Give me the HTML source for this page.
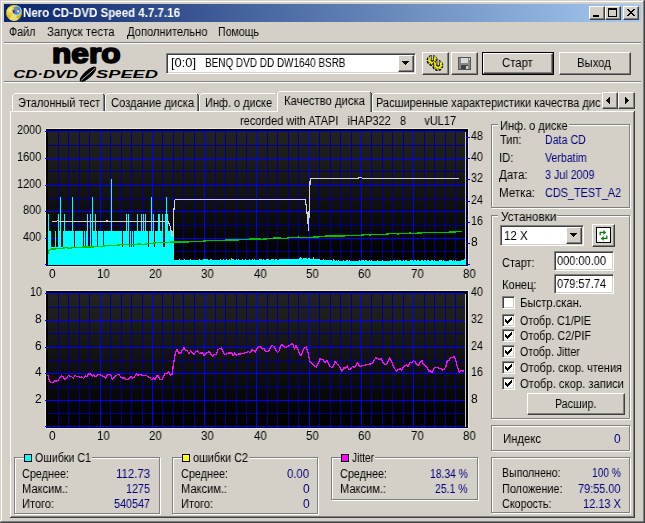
<!DOCTYPE html>
<html><head><meta charset="utf-8"><title>Nero CD-DVD Speed 4.7.7.16</title>
<style>
html,body{margin:0;padding:0;}
body{width:645px;height:523px;overflow:hidden;background:#D4D0C8;position:relative;
 font-family:"Liberation Sans",sans-serif;font-size:11px;color:#000;}
div,span,svg{position:absolute;box-sizing:border-box;}
.t{will-change:transform;white-space:pre;font-size:12px;line-height:14px;height:14px;transform-origin:0 0;}
.btn{background:#D4D0C8;border:1px solid;border-color:#fff #404040 #404040 #fff;
 box-shadow:inset -1px -1px 0 #808080, inset 1px 1px 0 #D4D0C8;}
.sunk{border:1px solid;border-color:#808080 #fff #fff #808080;
 box-shadow:inset 1px 1px 0 #404040, inset -1px -1px 0 #D4D0C8;}
.gb{border:1px solid #808080;box-shadow:1px 1px 0 #fff, inset 1px 1px 0 #fff;}
</style></head><body>

<div style="left:0px;top:0px;width:645px;height:1px;background:#D4D0C8;"></div>
<div style="left:0px;top:0px;width:1px;height:523px;background:#D4D0C8;"></div>
<div style="left:1px;top:1px;width:643px;height:1px;background:#fff;"></div>
<div style="left:1px;top:1px;width:1px;height:521px;background:#fff;"></div>
<div style="left:0px;top:522px;width:645px;height:1px;background:#404040;"></div>
<div style="left:644px;top:0px;width:1px;height:523px;background:#404040;"></div>
<div style="left:1px;top:521px;width:643px;height:1px;background:#808080;"></div>
<div style="left:643px;top:1px;width:1px;height:521px;background:#808080;"></div>
<div style="left:4px;top:4px;width:637px;height:18px;background:linear-gradient(to right,#0A246A 0%,#A6CAF0 100%);"></div>
<svg style="left:6px;top:5px" width="16" height="16" viewBox="0 0 16 16">
<defs><radialGradient id="cdg" cx="0.35" cy="0.3" r="0.8"><stop offset="0" stop-color="#f4ec60"/><stop offset="0.5" stop-color="#e2cc1c"/><stop offset="1" stop-color="#c8a814"/></radialGradient></defs>
<circle cx="8" cy="8" r="7.9" fill="url(#cdg)"/>
<path d="M8 8 L3 14 A7.9 7.9 0 0 0 12.5 14.5 Z" fill="#f0e8a0" opacity="0.7"/>
<path d="M8 8 L0.3 6 A7.9 7.9 0 0 1 3 2 Z" fill="#f8f080" opacity="0.6"/>
<circle cx="10.5" cy="5.6" r="4.6" fill="#2a8fe0" stroke="#dcdce4" stroke-width="1"/>
<path d="M6.6 5.5 Q6.5 8 8.4 8.4 L8.8 5.2 Z" fill="#b01010"/>
<path d="M9 1.6 L10.2 1.4 L10.8 4.2 L13.2 5.8 L12.4 7 L9.6 5.2 Z" fill="#ff6e40"/>
<path d="M11.2 1.3 L13.6 2.8 L12.6 3.6 L11 2.6 Z" fill="#30a030"/>
<circle cx="7.4" cy="3.9" r="0.8" fill="#ffe000"/>
<circle cx="12.2" cy="6.6" r="1" fill="#fff"/>
</svg>
<span class="t" style="left:23.02px;top:6.00px;transform:scaleX(0.9609);color:#fff;font-weight:bold;">Nero CD-DVD Speed 4.7.7.16</span>
<div class="btn" style="left:589px;top:6px;width:16px;height:14px;"><div style="left:3px;top:8px;width:6px;height:2px;background:#000"></div></div>
<div class="btn" style="left:605px;top:6px;width:16px;height:14px;"><div style="left:2px;top:1px;width:9px;height:9px;border:1px solid #000;border-top-width:2px"></div></div>
<div class="btn" style="left:623px;top:6px;width:16px;height:14px;"><svg style="left:3px;top:2px" width="8" height="7" viewBox="0 0 8 7" shape-rendering="crispEdges"><path d="M0 0h2v1h-2zM6 0h2v1h-2zM1 1h2v1h-2zM5 1h2v1h-2zM2 2h4v1h-4zM3 3h2v1h-2zM2 4h4v1h-4zM1 5h2v1h-2zM5 5h2v1h-2zM0 6h2v1h-2zM6 6h2v1h-2z" fill="#000"/></svg></div>
<span class="t" style="left:9.15px;top:25.00px;transform:scaleX(0.8982);">Файл</span>
<span class="t" style="left:47.02px;top:25.00px;transform:scaleX(0.9515);">Запуск теста</span>
<span class="t" style="left:126.53px;top:25.00px;transform:scaleX(0.9320);">Дополнительно</span>
<span class="t" style="left:217.56px;top:25.00px;transform:scaleX(0.8846);">Помощь</span>
<div style="left:4px;top:42px;width:637px;height:1px;background:#808080;"></div>
<div style="left:4px;top:43px;width:637px;height:1px;background:#fff;"></div>
<div style="left:4px;top:81px;width:637px;height:1px;background:#808080;"></div>
<div style="left:4px;top:82px;width:637px;height:1px;background:#fff;"></div>
<svg style="left:12px;top:45px" width="150" height="38" viewBox="0 0 150 38">
<text x="40" y="17.5" font-family="Liberation Sans" font-weight="bold" font-size="27" textLength="68.5" lengthAdjust="spacingAndGlyphs" fill="#000" stroke="#000" stroke-width="1.7" stroke-linejoin="round">nero</text>
<g font-family="Liberation Sans" font-weight="bold" font-style="italic" font-size="11.6" fill="#000">
<text x="1.2" y="33" textLength="65" lengthAdjust="spacingAndGlyphs">CD·DVD</text>
<text x="84" y="33" textLength="62" lengthAdjust="spacingAndGlyphs">SPEED</text>
</g>
<ellipse cx="76" cy="29.2" rx="3.7" ry="10.6" transform="rotate(48 76 29.2)" fill="#000"/>
<path d="M69 35.5 L83.5 23" stroke="#D4D0C8" stroke-width="0.9"/>
</svg>
<div class="sunk" style="left:166px;top:53px;width:250px;height:21px;background:#fff;"></div>
<span class="t" style="left:171.46px;top:56.00px;transform:scaleX(1.0707);">[0:0]</span>
<span class="t" style="left:204.79px;top:56.00px;transform:scaleX(0.8295);">BENQ DVD DD DW1640 BSRB</span>
<div class="btn" style="left:398px;top:55px;width:16px;height:17px;"><svg style="left:3px;top:5px" width="7" height="4" viewBox="0 0 7 4" shape-rendering="crispEdges"><path d="M0 0h7v1h-7zM1 1h5v1h-5zM2 2h3v1h-3zM3 3h1v1h-1z"/></svg></div>
<div class="btn" style="left:422px;top:52px;width:27px;height:23px;"><svg style="left:3px;top:2px" width="20" height="18" viewBox="0 0 20 18"><circle cx="6.1000000000000005" cy="5.4" r="3.7" fill="none" stroke="#000" stroke-width="3.6" stroke-dasharray="2.0 0.9"/><circle cx="6.4" cy="5.0" r="3.0" fill="#000"/><circle cx="6.4" cy="5.0" r="3.5" fill="none" stroke="#f4f000" stroke-width="2.0" stroke-dasharray="1.6 1.15"/><circle cx="6.4" cy="5.0" r="2.5" fill="none" stroke="#f4f000" stroke-width="1.5"/><rect x="4.800000000000001" y="-0.20000000000000018" width="3.2" height="6" fill="#202020"/><rect x="5.5" y="-0.20000000000000018" width="1.9" height="5.4" fill="#9a9aa4"/><rect x="6.2" y="-0.20000000000000018" width="0.7" height="5.4" fill="#d8d8e0"/><circle cx="11.799999999999999" cy="10.5" r="3.7" fill="none" stroke="#000" stroke-width="3.6" stroke-dasharray="2.0 0.9"/><circle cx="12.1" cy="10.1" r="3.0" fill="#000"/><circle cx="12.1" cy="10.1" r="3.5" fill="none" stroke="#f4f000" stroke-width="2.0" stroke-dasharray="1.6 1.15"/><circle cx="12.1" cy="10.1" r="2.5" fill="none" stroke="#f4f000" stroke-width="1.5"/><rect x="10.5" y="4.8999999999999995" width="3.2" height="6" fill="#202020"/><rect x="11.2" y="4.8999999999999995" width="1.9" height="5.4" fill="#9a9aa4"/><rect x="11.9" y="4.8999999999999995" width="0.7" height="5.4" fill="#d8d8e0"/></svg></div>
<div class="btn" style="left:451px;top:52px;width:27px;height:23px;"><svg style="left:6px;top:4px" width="14" height="14" viewBox="0 0 14 14" shape-rendering="crispEdges">
<rect x="0" y="0" width="13" height="13" fill="#555"/>
<rect x="1" y="1" width="11" height="11" fill="#888"/>
<rect x="3" y="1" width="7" height="5" fill="#d8d8d8"/>
<rect x="3" y="8" width="7" height="4" fill="#444"/>
<rect x="8" y="9" width="2" height="3" fill="#ccc"/>
<rect x="11" y="1" width="1" height="2" fill="#ddd"/>
</svg></div>
<div style="left:482px;top:52px;width:72px;height:23px;background:#000;"></div>
<div class="btn" style="left:483px;top:53px;width:70px;height:21px;"></div>
<span class="t" style="left:501.53px;top:56.00px;transform:scaleX(0.9445);">Старт</span>
<div class="btn" style="left:559px;top:52px;width:72px;height:23px;"></div>
<span class="t" style="left:576.93px;top:56.00px;transform:scaleX(0.9385);">Выход</span>
<div style="left:10px;top:111px;width:624px;height:1px;background:#fff;"></div>
<div style="left:10px;top:111px;width:1px;height:406px;background:#fff;"></div>
<div style="left:634px;top:111px;width:1px;height:407px;background:#404040;"></div>
<div style="left:633px;top:112px;width:1px;height:405px;background:#808080;"></div>
<div style="left:10px;top:517px;width:625px;height:1px;background:#404040;"></div>
<div style="left:11px;top:516px;width:623px;height:1px;background:#808080;"></div>
<div style="left:12px;top:93px;width:93px;height:18px;background:#D4D0C8;"></div>
<div style="left:12px;top:95px;width:1px;height:16px;background:#fff;"></div>
<div style="left:13px;top:94px;width:1px;height:1px;background:#fff;"></div>
<div style="left:14px;top:93px;width:89px;height:1px;background:#fff;"></div>
<div style="left:104px;top:95px;width:1px;height:16px;background:#404040;"></div>
<div style="left:103px;top:94px;width:1px;height:1px;background:#404040;"></div>
<div style="left:103px;top:95px;width:1px;height:16px;background:#808080;"></div>
<span class="t" style="left:17.54px;top:96.00px;transform:scaleX(0.9119);">Эталонный тест</span>
<div style="left:105px;top:93px;width:94px;height:18px;background:#D4D0C8;"></div>
<div style="left:105px;top:95px;width:1px;height:16px;background:#fff;"></div>
<div style="left:106px;top:94px;width:1px;height:1px;background:#fff;"></div>
<div style="left:107px;top:93px;width:90px;height:1px;background:#fff;"></div>
<div style="left:198px;top:95px;width:1px;height:16px;background:#404040;"></div>
<div style="left:197px;top:94px;width:1px;height:1px;background:#404040;"></div>
<div style="left:197px;top:95px;width:1px;height:16px;background:#808080;"></div>
<span class="t" style="left:110.54px;top:96.00px;transform:scaleX(0.9289);">Создание диска</span>
<div style="left:199px;top:93px;width:78px;height:18px;background:#D4D0C8;"></div>
<div style="left:199px;top:95px;width:1px;height:16px;background:#fff;"></div>
<div style="left:200px;top:94px;width:1px;height:1px;background:#fff;"></div>
<div style="left:201px;top:93px;width:74px;height:1px;background:#fff;"></div>
<div style="left:276px;top:95px;width:1px;height:16px;background:#404040;"></div>
<div style="left:275px;top:94px;width:1px;height:1px;background:#404040;"></div>
<div style="left:275px;top:95px;width:1px;height:16px;background:#808080;"></div>
<span class="t" style="left:204.54px;top:96.00px;transform:scaleX(0.9108);">Инф. о диске</span>
<div style="left:372px;top:93px;width:235px;height:18px;background:#D4D0C8;"></div>
<div style="left:372px;top:95px;width:1px;height:16px;background:#fff;"></div>
<div style="left:373px;top:94px;width:1px;height:1px;background:#fff;"></div>
<div style="left:374px;top:93px;width:231px;height:1px;background:#fff;"></div>
<div style="left:606px;top:95px;width:1px;height:16px;background:#404040;"></div>
<div style="left:605px;top:94px;width:1px;height:1px;background:#404040;"></div>
<div style="left:605px;top:95px;width:1px;height:16px;background:#808080;"></div>
<span class="t" style="left:375.84px;top:96.00px;transform:scaleX(0.9193);">Расширенные характеристики качества дис</span>
<div style="left:601px;top:92px;width:34px;height:19px;background:#D4D0C8;"></div>
<div style="left:275px;top:93px;width:2px;height:18px;background:#D4D0C8;"></div>
<div style="left:277px;top:91px;width:95px;height:21px;background:#D4D0C8;"></div>
<div style="left:277px;top:93px;width:1px;height:19px;background:#fff;"></div>
<div style="left:278px;top:92px;width:1px;height:1px;background:#fff;"></div>
<div style="left:279px;top:91px;width:91px;height:1px;background:#fff;"></div>
<div style="left:371px;top:93px;width:1px;height:19px;background:#404040;"></div>
<div style="left:370px;top:92px;width:1px;height:1px;background:#404040;"></div>
<div style="left:370px;top:93px;width:1px;height:19px;background:#808080;"></div>
<span class="t" style="left:283.53px;top:94.00px;transform:scaleX(0.9423);">Качество диска</span>
<div style="left:278px;top:111px;width:92px;height:1px;background:#D4D0C8;"></div>
<div class="btn" style="left:602px;top:92px;width:16px;height:17px;"><svg style="left:3px;top:4px" width="4" height="7" viewBox="0 0 4 7" shape-rendering="crispEdges"><path d="M3 0h1v7h-1zM2 1h1v5h-1zM1 2h1v3h-1zM0 3h1v1h-1z"/></svg></div>
<div class="btn" style="left:618px;top:92px;width:17px;height:17px;"><svg style="left:6px;top:4px" width="4" height="7" viewBox="0 0 4 7" shape-rendering="crispEdges"><path d="M0 0h1v7h-1zM1 1h1v5h-1zM2 2h1v3h-1zM3 3h1v1h-1z"/></svg></div>
<span class="t" style="left:240.04px;top:114.00px;transform:scaleX(0.9140);">recorded with ATAPI   iHAP322   8      vUL17</span>
<svg style="left:0;top:0" width="645" height="523" viewBox="0 0 645 523"><defs><linearGradient id="g131" gradientUnits="userSpaceOnUse" x1="0" y1="131" x2="0" y2="264"><stop offset="0" stop-color="#232323"/><stop offset="1" stop-color="#000"/></linearGradient></defs><g shape-rendering="crispEdges"><path d="M47 128h422v1h-422zM46 129h1v1h-1zM45 130h1v136h-1zM468 129h1v137h-1zM47 266h421v1h-421z" fill="#e9e7e0"/><rect x="46" y="129" width="422" height="137" fill="#000"/><rect x="48" y="131" width="417" height="134" fill="url(#g131)"/><rect x="465" y="132" width="1" height="133" fill="#c8c8c8"/><path d="M58.5 131V266 M68.5 131V266 M79.5 131V266 M89.5 131V266 M110.5 131V266 M121.5 131V266 M131.5 131V266 M142.5 131V266 M162.5 131V266 M173.5 131V266 M183.5 131V266 M194.5 131V266 M215.5 131V266 M225.5 131V266 M236.5 131V266 M246.5 131V266 M267.5 131V266 M277.5 131V266 M288.5 131V266 M298.5 131V266 M319.5 131V266 M330.5 131V266 M340.5 131V266 M351.5 131V266 M371.5 131V266 M382.5 131V266 M392.5 131V266 M403.5 131V266 M424.5 131V266 M434.5 131V266 M445.5 131V266 M455.5 131V266 M48 145.5H465 M48 171.5H465 M48 198.5H465 M48 225.5H465 M48 251.5H465" stroke="#000090" stroke-width="1" fill="none"/><path d="M100.5 131V266 M152.5 131V266 M204.5 131V266 M256.5 131V266 M309.5 131V266 M361.5 131V266 M413.5 131V266 M45 131.5H465 M45 158.5H465 M45 185.5H465 M45 211.5H465 M45 238.5H465 M45 264.5H465" stroke="#0000ff" stroke-width="1" fill="none"/><path d="M48 214h1V265h-1zM49 231h1V265h-1zM50 231h1V265h-1zM51 247h1V265h-1zM52 247h1V265h-1zM53 247h1V265h-1zM54 247h1V265h-1zM55 231h1V265h-1zM56 247h1V265h-1zM57 247h1V265h-1zM58 214h1V265h-1zM59 231h1V265h-1zM60 197h1V265h-1zM61 247h1V265h-1zM62 247h1V265h-1zM63 231h1V265h-1zM64 214h1V265h-1zM65 231h1V265h-1zM66 231h1V265h-1zM67 231h1V265h-1zM68 231h1V265h-1zM69 231h1V265h-1zM70 231h1V265h-1zM71 231h1V265h-1zM72 197h1V265h-1zM73 231h1V265h-1zM74 247h1V265h-1zM75 231h1V265h-1zM76 231h1V265h-1zM77 231h1V265h-1zM78 231h1V265h-1zM79 231h1V265h-1zM80 231h1V265h-1zM81 231h1V265h-1zM82 231h1V265h-1zM83 247h1V265h-1zM84 231h1V265h-1zM85 247h1V265h-1zM86 231h1V265h-1zM87 214h1V265h-1zM88 247h1V265h-1zM89 247h1V265h-1zM90 214h1V265h-1zM91 247h1V265h-1zM92 197h1V265h-1zM93 231h1V265h-1zM94 231h1V265h-1zM95 214h1V265h-1zM96 231h1V265h-1zM97 247h1V265h-1zM98 231h1V265h-1zM99 231h1V265h-1zM100 231h1V265h-1zM101 231h1V265h-1zM102 231h1V265h-1zM103 247h1V265h-1zM104 231h1V265h-1zM105 231h1V265h-1zM106 231h1V265h-1zM107 231h1V265h-1zM108 231h1V265h-1zM109 231h1V265h-1zM110 231h1V265h-1zM111 179h1V265h-1zM112 231h1V265h-1zM113 231h1V265h-1zM114 231h1V265h-1zM115 231h1V265h-1zM116 231h1V265h-1zM117 231h1V265h-1zM118 231h1V265h-1zM119 231h1V265h-1zM120 231h1V265h-1zM121 231h1V265h-1zM122 247h1V265h-1zM123 231h1V265h-1zM124 231h1V265h-1zM125 231h1V265h-1zM126 214h1V265h-1zM127 231h1V265h-1zM128 214h1V265h-1zM129 247h1V265h-1zM130 231h1V265h-1zM131 247h1V265h-1zM132 231h1V265h-1zM133 247h1V265h-1zM134 231h1V265h-1zM135 231h1V265h-1zM136 231h1V265h-1zM137 214h1V265h-1zM138 231h1V265h-1zM139 231h1V265h-1zM140 231h1V265h-1zM141 214h1V265h-1zM142 231h1V265h-1zM143 214h1V265h-1zM144 231h1V265h-1zM145 214h1V265h-1zM146 231h1V265h-1zM147 231h1V265h-1zM148 247h1V265h-1zM149 231h1V265h-1zM150 231h1V265h-1zM151 197h1V265h-1zM152 231h1V265h-1zM153 214h1V265h-1zM154 247h1V265h-1zM155 231h1V265h-1zM156 231h1V265h-1zM157 231h1V265h-1zM158 214h1V265h-1zM159 214h1V265h-1zM160 231h1V265h-1zM161 231h1V265h-1zM162 214h1V265h-1zM163 247h1V265h-1zM164 247h1V265h-1zM165 214h1V265h-1zM166 197h1V265h-1zM167 214h1V265h-1zM168 231h1V265h-1zM169 231h1V265h-1zM170 231h1V265h-1zM171 231h1V265h-1zM172 231h1V265h-1zM173 236h1V265h-1zM174 260h1V265h-1zM175 260h1V265h-1zM176 260h1V265h-1zM177 260h1V265h-1zM178 260h1V265h-1zM179 259h1V265h-1zM180 260h1V265h-1zM181 260h1V265h-1zM182 260h1V265h-1zM183 260h1V265h-1zM184 259h1V265h-1zM185 260h1V265h-1zM186 260h1V265h-1zM187 260h1V265h-1zM188 260h1V265h-1zM189 260h1V265h-1zM190 259h1V265h-1zM191 260h1V265h-1zM192 260h1V265h-1zM193 260h1V265h-1zM194 260h1V265h-1zM195 260h1V265h-1zM196 260h1V265h-1zM197 260h1V265h-1zM198 260h1V265h-1zM199 259h1V265h-1zM200 260h1V265h-1zM201 260h1V265h-1zM202 260h1V265h-1zM203 259h1V265h-1zM204 259h1V265h-1zM205 259h1V265h-1zM206 259h1V265h-1zM207 259h1V265h-1zM208 260h1V265h-1zM209 260h1V265h-1zM210 259h1V265h-1zM211 259h1V265h-1zM212 260h1V265h-1zM213 260h1V265h-1zM214 260h1V265h-1zM215 260h1V265h-1zM216 260h1V265h-1zM217 260h1V265h-1zM218 260h1V265h-1zM219 260h1V265h-1zM220 259h1V265h-1zM221 260h1V265h-1zM222 260h1V265h-1zM223 259h1V265h-1zM224 260h1V265h-1zM225 260h1V265h-1zM226 259h1V265h-1zM227 260h1V265h-1zM228 260h1V265h-1zM229 259h1V265h-1zM230 260h1V265h-1zM231 258h1V265h-1zM232 259h1V265h-1zM233 259h1V265h-1zM234 260h1V265h-1zM235 260h1V265h-1zM236 259h1V265h-1zM237 260h1V265h-1zM238 259h1V265h-1zM239 260h1V265h-1zM240 260h1V265h-1zM241 260h1V265h-1zM242 259h1V265h-1zM243 260h1V265h-1zM244 260h1V265h-1zM245 259h1V265h-1zM246 260h1V265h-1zM247 260h1V265h-1zM248 260h1V265h-1zM249 259h1V265h-1zM250 260h1V265h-1zM251 260h1V265h-1zM252 259h1V265h-1zM253 260h1V265h-1zM254 259h1V265h-1zM255 260h1V265h-1zM256 260h1V265h-1zM257 260h1V265h-1zM258 260h1V265h-1zM259 259h1V265h-1zM260 259h1V265h-1zM261 259h1V265h-1zM262 260h1V265h-1zM263 259h1V265h-1zM264 260h1V265h-1zM265 260h1V265h-1zM266 259h1V265h-1zM267 259h1V265h-1zM268 259h1V265h-1zM269 260h1V265h-1zM270 260h1V265h-1zM271 259h1V265h-1zM272 259h1V265h-1zM273 259h1V265h-1zM274 260h1V265h-1zM275 259h1V265h-1zM276 259h1V265h-1zM277 260h1V265h-1zM278 260h1V265h-1zM279 259h1V265h-1zM280 259h1V265h-1zM281 259h1V265h-1zM282 259h1V265h-1zM283 259h1V265h-1zM284 259h1V265h-1zM285 259h1V265h-1zM286 259h1V265h-1zM287 259h1V265h-1zM288 259h1V265h-1zM289 259h1V265h-1zM290 259h1V265h-1zM291 259h1V265h-1zM292 259h1V265h-1zM293 259h1V265h-1zM294 259h1V265h-1zM295 259h1V265h-1zM296 259h1V265h-1zM297 259h1V265h-1zM298 259h1V265h-1zM299 258h1V265h-1zM300 257h1V265h-1zM301 258h1V265h-1zM302 259h1V265h-1zM303 258h1V265h-1zM304 258h1V265h-1zM305 258h1V265h-1zM306 258h1V265h-1zM307 259h1V265h-1zM308 258h1V265h-1zM309 258h1V265h-1zM310 259h1V265h-1zM311 259h1V265h-1zM312 259h1V265h-1zM313 257h1V265h-1zM314 259h1V265h-1zM315 259h1V265h-1zM316 259h1V265h-1zM317 259h1V265h-1zM318 259h1V265h-1zM319 259h1V265h-1zM320 260h1V265h-1zM321 260h1V265h-1zM322 260h1V265h-1zM323 259h1V265h-1zM324 260h1V265h-1zM325 260h1V265h-1zM326 260h1V265h-1zM327 260h1V265h-1zM328 260h1V265h-1zM329 260h1V265h-1zM330 260h1V265h-1zM331 260h1V265h-1zM332 261h1V265h-1zM333 259h1V265h-1zM334 260h1V265h-1zM335 261h1V265h-1zM336 260h1V265h-1zM337 261h1V265h-1zM338 260h1V265h-1zM339 261h1V265h-1zM340 261h1V265h-1zM341 261h1V265h-1zM342 261h1V265h-1zM343 260h1V265h-1zM344 261h1V265h-1zM345 261h1V265h-1zM346 260h1V265h-1zM347 260h1V265h-1zM348 261h1V265h-1zM349 260h1V265h-1zM350 261h1V265h-1zM351 261h1V265h-1zM352 261h1V265h-1zM353 261h1V265h-1zM354 261h1V265h-1zM355 261h1V265h-1zM356 261h1V265h-1zM357 261h1V265h-1zM358 261h1V265h-1zM359 260h1V265h-1zM360 261h1V265h-1zM361 260h1V265h-1zM362 260h1V265h-1zM363 260h1V265h-1zM364 261h1V265h-1zM365 260h1V265h-1zM366 260h1V265h-1zM367 261h1V265h-1zM368 261h1V265h-1zM369 260h1V265h-1zM370 261h1V265h-1zM371 260h1V265h-1zM372 261h1V265h-1zM373 261h1V265h-1zM374 261h1V265h-1zM375 261h1V265h-1zM376 261h1V265h-1zM377 260h1V265h-1zM378 261h1V265h-1zM379 261h1V265h-1zM380 261h1V265h-1zM381 261h1V265h-1zM382 260h1V265h-1zM383 261h1V265h-1zM384 261h1V265h-1zM385 261h1V265h-1zM386 261h1V265h-1zM387 261h1V265h-1zM388 261h1V265h-1zM389 261h1V265h-1zM390 260h1V265h-1zM391 261h1V265h-1zM392 261h1V265h-1zM393 260h1V265h-1zM394 260h1V265h-1zM395 261h1V265h-1zM396 260h1V265h-1zM397 260h1V265h-1zM398 261h1V265h-1zM399 260h1V265h-1zM400 260h1V265h-1zM401 261h1V265h-1zM402 261h1V265h-1zM403 260h1V265h-1zM404 261h1V265h-1zM405 260h1V265h-1zM406 260h1V265h-1zM407 261h1V265h-1zM408 261h1V265h-1zM409 261h1V265h-1zM410 260h1V265h-1zM411 260h1V265h-1zM412 260h1V265h-1zM413 261h1V265h-1zM414 260h1V265h-1zM415 260h1V265h-1zM416 261h1V265h-1zM417 260h1V265h-1zM418 260h1V265h-1zM419 261h1V265h-1zM420 261h1V265h-1zM421 260h1V265h-1zM422 260h1V265h-1zM423 261h1V265h-1zM424 260h1V265h-1zM425 260h1V265h-1zM426 261h1V265h-1zM427 260h1V265h-1zM428 260h1V265h-1zM429 261h1V265h-1zM430 261h1V265h-1zM431 260h1V265h-1zM432 260h1V265h-1zM433 261h1V265h-1zM434 260h1V265h-1zM435 261h1V265h-1zM436 261h1V265h-1zM437 261h1V265h-1zM438 261h1V265h-1zM439 260h1V265h-1zM440 260h1V265h-1zM441 260h1V265h-1zM442 261h1V265h-1zM443 260h1V265h-1zM444 261h1V265h-1zM445 261h1V265h-1zM446 261h1V265h-1zM447 261h1V265h-1zM448 261h1V265h-1zM449 260h1V265h-1zM450 260h1V265h-1zM451 260h1V265h-1zM452 261h1V265h-1zM453 260h1V265h-1zM454 261h1V265h-1zM455 260h1V265h-1zM456 261h1V265h-1zM457 261h1V265h-1zM458 261h1V265h-1zM459 261h1V265h-1zM460 261h1V265h-1zM461 260h1V265h-1zM462 260h1V265h-1zM463 260h1V265h-1zM464 259h1V265h-1zM465 260h1V265h-1z" fill="#00ffff"/></g><polyline shape-rendering="crispEdges" fill="none" stroke="#00c400" stroke-width="1.25" points="48.5,254.5 48.8,251 50,249.2 54,249.0 58,248.7 62,248.2 66,247.8 70,248.2 74,247.4 78,247.4 82,247.1 86,246.9 90,247.0 94,246.9 98,246.2 102,246.2 106,245.8 110,245.7 114,245.4 118,245.0 122,244.8 126,244.6 130,244.9 134,244.4 138,244.0 142,244.2 146,244.1 150,243.5 154,243.0 158,242.8 162,242.6 166,242.5 170,242.1 174,242.1 178,241.9 182,242.0 186,242.1 190,241.8 194,241.4 198,241.3 202,241.2 206,240.9 210,240.7 214,240.4 218,240.4 222,240.7 226,240.0 230,240.1 234,240.0 238,240.0 242,239.4 246,239.3 250,239.1 254,239.1 258,239.0 262,239.2 266,238.9 270,238.8 274,238.0 278,237.9 282,238.2 286,238.2 290,237.7 294,237.7 298,237.1 302,237.2 306,237.4 310,237.2 314,237.1 318,237.0 322,236.3 326,236.1 330,236.0 334,236.1 338,236.0 342,236.1 346,235.8 350,235.6 354,235.5 358,235.2 362,235.1 366,234.6 370,235.0 374,234.4 378,234.8 382,234.5 386,234.1 390,233.8 394,233.8 398,233.9 402,233.8 406,233.2 410,233.1 414,233.2 418,233.1 422,232.9 426,232.6 430,232.7 434,232.2 438,232.2 442,232.2 446,232.4 450,232.0 454,232.1 458,231.6 462,231.3"/><polyline shape-rendering="crispEdges" fill="none" stroke="#d4d4d4" stroke-width="1.15" points="52,221.7 56,221.7 57,220.9 59,220.9 60,221.7 105.5,221.7 106.5,221 108,221 109,221.7 168.3,221.7 170,226 172.1,235.5 173.2,236 173.6,215 174.6,200.2 175.5,199.6 305.4,199.6 307.3,215.3 308.7,231 309.3,200 310.2,178.6 311,178.1 358.5,178.1 359.5,177.4 361,177.4 362,178.1 459,178.1"/><g shape-rendering="crispEdges"><path d="M466 261.5h2 M466 259.5h2 M466 256.5h2 M466 254.5h2 M466 251.5h2 M466 248.5h2 M466 246.5h2 M466 240.5h2 M466 238.5h2 M466 235.5h2 M466 232.5h2 M466 230.5h2 M466 227.5h2 M466 224.5h2 M466 219.5h2 M466 216.5h2 M466 214.5h2 M466 211.5h2 M466 209.5h2 M466 206.5h2 M466 203.5h2 M466 198.5h2 M466 195.5h2 M466 193.5h2 M466 190.5h2 M466 187.5h2 M466 185.5h2 M466 182.5h2 M466 177.5h2 M466 174.5h2 M466 171.5h2 M466 169.5h2 M466 166.5h2 M466 164.5h2 M466 161.5h2 M466 156.5h2 M466 153.5h2 M466 150.5h2 M466 148.5h2 M466 145.5h2 M466 142.5h2 M466 140.5h2 M466 134.5h2 M466 132.5h2" stroke="#000090"/><path d="M466 264.5h4 M466 243.5h4 M466 222.5h4 M466 201.5h4 M466 179.5h4 M466 158.5h4 M466 137.5h4" stroke="#0000ff"/></g></svg>
<span class="t" style="left:17.04px;top:123.00px;transform:scaleX(0.9102);">2000</span>
<span class="t" style="left:17.04px;top:150.00px;transform:scaleX(0.9102);">1600</span>
<span class="t" style="left:17.04px;top:177.00px;transform:scaleX(0.9102);">1200</span>
<span class="t" style="left:23.04px;top:203.00px;transform:scaleX(0.9140);">800</span>
<span class="t" style="left:23.04px;top:230.00px;transform:scaleX(0.9140);">400</span>
<span class="t" style="left:471.16px;top:129.00px;transform:scaleX(0.8840);">48</span>
<span class="t" style="left:471.16px;top:150.00px;transform:scaleX(0.8840);">40</span>
<span class="t" style="left:471.16px;top:171.00px;transform:scaleX(0.8840);">32</span>
<span class="t" style="left:471.16px;top:193.00px;transform:scaleX(0.8840);">24</span>
<span class="t" style="left:471.16px;top:214.00px;transform:scaleX(0.8840);">16</span>
<span class="t" style="left:470.53px;top:235.00px;transform:scaleX(0.9440);">8</span>
<span class="t" style="left:49.42px;top:267.00px;transform:scaleX(0.9589);">0</span>
<span class="t" style="left:97.32px;top:267.00px;transform:scaleX(0.9514);">10</span>
<span class="t" style="left:148.82px;top:267.00px;transform:scaleX(0.9514);">20</span>
<span class="t" style="left:201.42px;top:267.00px;transform:scaleX(0.9514);">30</span>
<span class="t" style="left:254.22px;top:267.00px;transform:scaleX(0.9514);">40</span>
<span class="t" style="left:306.12px;top:267.00px;transform:scaleX(0.9514);">50</span>
<span class="t" style="left:358.42px;top:267.00px;transform:scaleX(0.9514);">60</span>
<span class="t" style="left:411.02px;top:267.00px;transform:scaleX(0.9514);">70</span>
<span class="t" style="left:462.92px;top:267.00px;transform:scaleX(0.9514);">80</span>
<svg style="left:0;top:0" width="645" height="523" viewBox="0 0 645 523"><defs><linearGradient id="g293" gradientUnits="userSpaceOnUse" x1="0" y1="293" x2="0" y2="426"><stop offset="0" stop-color="#232323"/><stop offset="1" stop-color="#000"/></linearGradient></defs><g shape-rendering="crispEdges"><path d="M47 290h422v1h-422zM46 291h1v1h-1zM45 292h1v136h-1zM468 291h1v137h-1zM47 428h421v1h-421z" fill="#e9e7e0"/><rect x="46" y="291" width="422" height="137" fill="#000"/><rect x="48" y="293" width="417" height="134" fill="url(#g293)"/><rect x="465" y="294" width="1" height="133" fill="#c8c8c8"/><path d="M58.5 293V428 M68.5 293V428 M79.5 293V428 M89.5 293V428 M110.5 293V428 M121.5 293V428 M131.5 293V428 M142.5 293V428 M162.5 293V428 M173.5 293V428 M183.5 293V428 M194.5 293V428 M215.5 293V428 M225.5 293V428 M236.5 293V428 M246.5 293V428 M267.5 293V428 M277.5 293V428 M288.5 293V428 M298.5 293V428 M319.5 293V428 M330.5 293V428 M340.5 293V428 M351.5 293V428 M371.5 293V428 M382.5 293V428 M392.5 293V428 M403.5 293V428 M424.5 293V428 M434.5 293V428 M445.5 293V428 M455.5 293V428 M48 307.5H465 M48 333.5H465 M48 360.5H465 M48 387.5H465 M48 413.5H465" stroke="#000090" stroke-width="1" fill="none"/><path d="M100.5 293V428 M152.5 293V428 M204.5 293V428 M256.5 293V428 M309.5 293V428 M361.5 293V428 M413.5 293V428 M45 293.5H465 M45 320.5H465 M45 347.5H465 M45 373.5H465 M45 400.5H465 M45 426.5H465" stroke="#0000ff" stroke-width="1" fill="none"/></g><polyline shape-rendering="crispEdges" fill="none" stroke="#f010f0" stroke-width="1.3" stroke-linejoin="round" points="47.9,375.2 49.6,381.4 51.3,382.7 53.0,382.4 54.7,380.7 56.4,381.2 58.1,380.3 59.8,378.0 61.5,375.7 63.2,377.0 64.9,379.9 66.6,377.8 68.3,375.7 70.0,376.3 71.7,376.8 73.4,377.9 75.1,375.5 76.8,376.5 78.5,376.7 80.2,377.6 81.9,376.9 83.6,378.7 85.3,376.0 87.0,376.5 88.7,373.7 90.4,374.1 92.1,376.2 93.8,374.8 95.5,376.8 97.2,375.1 98.9,374.5 100.6,374.9 102.3,375.9 104.0,376.9 105.7,378.1 107.4,374.5 109.1,374.2 110.8,375.3 112.5,379.4 114.2,377.2 115.9,375.7 117.6,374.6 119.3,375.0 121.0,377.3 122.7,377.9 124.4,378.1 126.1,379.2 127.8,379.3 129.5,377.6 131.2,376.4 132.9,378.0 134.6,376.7 136.3,373.9 138.0,375.4 139.7,374.2 141.4,375.0 143.1,375.8 144.8,375.8 146.5,375.6 148.2,376.8 149.9,377.4 151.6,379.8 153.3,377.6 155.0,379.4 156.7,375.9 158.4,376.0 160.1,379.3 161.8,379.8 163.5,376.5 165.2,373.6 166.9,373.7 168.6,372.1 170.3,375.2 172.0,374.5 173.7,362.8 175.4,353.1 177.1,349.6 178.8,353.3 180.5,352.9 182.2,350.6 183.9,347.7 185.6,349.9 187.3,350.7 189.0,353.9 190.7,350.7 192.4,353.2 194.1,354.3 195.8,351.8 197.5,350.9 199.2,353.2 200.9,353.1 202.6,353.1 204.3,355.6 206.0,353.4 207.7,352.6 209.4,351.6 211.1,355.0 212.8,356.0 214.5,354.2 216.2,354.5 217.9,349.6 219.6,348.7 221.3,348.0 223.0,351.1 224.7,354.4 226.4,354.3 228.1,353.0 229.8,352.9 231.5,353.0 233.2,355.4 234.9,352.9 236.6,355.0 238.3,354.2 240.0,353.9 241.7,353.8 243.4,353.5 245.1,352.6 246.8,352.1 248.5,351.7 250.2,352.9 251.9,349.9 253.6,350.4 255.3,352.3 257.0,348.9 258.7,346.8 260.4,346.7 262.1,349.1 263.8,348.5 265.5,351.6 267.2,351.5 268.9,351.2 270.6,346.9 272.3,345.4 274.0,346.9 275.7,350.1 277.4,352.5 279.1,351.0 280.8,345.6 282.5,344.5 284.2,347.0 285.9,347.4 287.6,346.4 289.3,345.7 291.0,344.0 292.7,343.4 294.4,349.2 296.1,345.6 297.8,348.5 299.5,354.0 301.2,355.5 302.9,350.6 304.6,347.6 306.3,347.1 308.0,352.6 309.7,360.7 311.4,363.1 313.1,364.3 314.8,366.2 316.5,367.0 318.2,363.2 319.9,358.9 321.6,359.4 323.3,360.0 325.0,362.7 326.7,360.3 328.4,363.4 330.1,366.3 331.8,367.6 333.5,366.5 335.2,361.3 336.9,363.9 338.6,365.4 340.3,368.0 342.0,371.1 343.7,368.0 345.4,368.0 347.1,366.0 348.8,369.8 350.5,368.9 352.2,366.7 353.9,367.3 355.6,366.5 357.3,362.5 359.0,365.5 360.7,366.7 362.4,365.6 364.1,365.9 365.8,364.6 367.5,364.5 369.2,364.0 370.9,364.1 372.6,363.0 374.3,359.7 376.0,357.9 377.7,358.7 379.4,359.6 381.1,358.4 382.8,362.0 384.5,364.1 386.2,364.7 387.9,361.7 389.6,357.7 391.3,361.0 393.0,365.4 394.7,368.5 396.4,370.9 398.1,369.5 399.8,368.7 401.5,369.9 403.2,367.6 404.9,365.9 406.6,364.9 408.3,366.5 410.0,362.6 411.7,362.5 413.4,360.5 415.1,361.9 416.8,364.9 418.5,365.3 420.2,362.0 421.9,360.6 423.6,364.5 425.3,365.5 427.0,367.2 428.7,371.8 430.4,370.6 432.1,372.5 433.8,368.2 435.5,367.5 437.2,367.4 438.9,368.4 440.6,368.5 442.3,370.2 444.0,369.4 445.7,367.1 447.4,360.3 449.1,360.4 450.8,357.5 452.5,357.5 454.2,356.7 455.9,360.8 457.6,367.7 459.3,372.3 461.0,370.3 462.7,371.1 464.4,371.1"/><g shape-rendering="crispEdges"></g></svg>
<span class="t" style="left:29.56px;top:285.00px;transform:scaleX(0.8840);">10</span>
<span class="t" style="left:34.92px;top:312.00px;transform:scaleX(0.9589);">8</span>
<span class="t" style="left:34.92px;top:339.00px;transform:scaleX(0.9589);">6</span>
<span class="t" style="left:34.92px;top:365.00px;transform:scaleX(0.9589);">4</span>
<span class="t" style="left:34.92px;top:392.00px;transform:scaleX(0.9589);">2</span>
<span class="t" style="left:471.16px;top:285.00px;transform:scaleX(0.8840);">40</span>
<span class="t" style="left:471.16px;top:312.00px;transform:scaleX(0.8840);">32</span>
<span class="t" style="left:471.16px;top:339.00px;transform:scaleX(0.8840);">24</span>
<span class="t" style="left:471.16px;top:365.00px;transform:scaleX(0.8840);">16</span>
<span class="t" style="left:470.53px;top:392.00px;transform:scaleX(0.9440);">8</span>
<span class="t" style="left:49.42px;top:429.00px;transform:scaleX(0.9589);">0</span>
<span class="t" style="left:97.32px;top:429.00px;transform:scaleX(0.9514);">10</span>
<span class="t" style="left:148.82px;top:429.00px;transform:scaleX(0.9514);">20</span>
<span class="t" style="left:201.42px;top:429.00px;transform:scaleX(0.9514);">30</span>
<span class="t" style="left:254.22px;top:429.00px;transform:scaleX(0.9514);">40</span>
<span class="t" style="left:306.12px;top:429.00px;transform:scaleX(0.9514);">50</span>
<span class="t" style="left:358.42px;top:429.00px;transform:scaleX(0.9514);">60</span>
<span class="t" style="left:411.02px;top:429.00px;transform:scaleX(0.9514);">70</span>
<span class="t" style="left:462.92px;top:429.00px;transform:scaleX(0.9514);">80</span>
<div class="gb" style="left:14px;top:457px;width:146px;height:57px;"></div>
<div style="left:24px;top:457px;width:68px;height:2px;background:#D4D0C8;"></div>
<div style="left:24px;top:454px;width:8px;height:8px;background:#00ffff;border:1px solid #000;"></div>
<span class="t" style="left:34.56px;top:451.00px;transform:scaleX(0.8866);">Ошибки C1</span>
<span class="t" style="left:21.55px;top:467.00px;transform:scaleX(0.9028);">Среднее:</span>
<span class="t" style="left:116.13px;top:467.00px;transform:scaleX(0.9494);color:#000080;">112.73</span>
<span class="t" style="left:21.54px;top:482.00px;transform:scaleX(0.9235);">Максим.:</span>
<span class="t" style="left:126.15px;top:482.00px;transform:scaleX(0.8990);color:#000080;">1275</span>
<span class="t" style="left:21.54px;top:497.00px;transform:scaleX(0.9200);">Итого:</span>
<span class="t" style="left:114.15px;top:497.00px;transform:scaleX(0.8990);color:#000080;">540547</span>
<div class="gb" style="left:172px;top:457px;width:146px;height:57px;"></div>
<div style="left:182px;top:457px;width:67px;height:2px;background:#D4D0C8;"></div>
<div style="left:182px;top:454px;width:8px;height:8px;background:#ffff00;border:1px solid #000;"></div>
<span class="t" style="left:192.55px;top:451.00px;transform:scaleX(0.9090);">ошибки C2</span>
<span class="t" style="left:180.55px;top:467.00px;transform:scaleX(0.9028);">Среднее:</span>
<span class="t" style="left:287.13px;top:467.00px;transform:scaleX(0.9419);color:#000080;">0.00</span>
<span class="t" style="left:180.54px;top:482.00px;transform:scaleX(0.9235);">Максим.:</span>
<span class="t" style="left:302.61px;top:482.00px;transform:scaleX(0.9739);color:#000080;">0</span>
<span class="t" style="left:180.54px;top:497.00px;transform:scaleX(0.9200);">Итого:</span>
<span class="t" style="left:302.61px;top:497.00px;transform:scaleX(0.9739);color:#000080;">0</span>
<div class="gb" style="left:331px;top:457px;width:147px;height:43px;"></div>
<div style="left:341px;top:457px;width:34px;height:2px;background:#D4D0C8;"></div>
<div style="left:341px;top:454px;width:8px;height:8px;background:#ff00ff;border:1px solid #000;"></div>
<span class="t" style="left:351.58px;top:451.00px;transform:scaleX(0.8460);">Jitter</span>
<span class="t" style="left:339.55px;top:467.00px;transform:scaleX(0.9028);">Среднее:</span>
<span class="t" style="left:429.87px;top:467.00px;transform:scaleX(0.8630);color:#000080;">18.34 %</span>
<span class="t" style="left:339.54px;top:482.00px;transform:scaleX(0.9235);">Максим.:</span>
<span class="t" style="left:435.37px;top:482.00px;transform:scaleX(0.8699);color:#000080;">25.1 %</span>
<div class="gb" style="left:491px;top:124px;width:139px;height:84px;"></div>
<div style="left:498px;top:124px;width:71px;height:2px;background:#D4D0C8;"></div>
<span class="t" style="left:499.94px;top:119.00px;transform:scaleX(0.9176);">Инф. о диске</span>
<span class="t" style="left:500.04px;top:133.00px;transform:scaleX(0.9212);">Тип:</span>
<span class="t" style="left:544.76px;top:133.00px;transform:scaleX(0.8867);color:#000080;">Data CD</span>
<span class="t" style="left:498.53px;top:150.50px;transform:scaleX(0.9456);">ID:</span>
<span class="t" style="left:544.96px;top:150.50px;transform:scaleX(0.8826);color:#000080;">Verbatim</span>
<span class="t" style="left:499.32px;top:168.00px;transform:scaleX(0.9529);">Дата:</span>
<span class="t" style="left:544.55px;top:168.00px;transform:scaleX(0.8939);color:#000080;">3 Jul 2009</span>
<span class="t" style="left:498.52px;top:186.00px;transform:scaleX(0.9619);">Метка:</span>
<span class="t" style="left:544.95px;top:186.00px;transform:scaleX(0.9068);color:#000080;">CDS_TEST_A2</span>
<div class="gb" style="left:491px;top:215px;width:139px;height:204px;"></div>
<div style="left:498px;top:215px;width:59px;height:2px;background:#D4D0C8;"></div>
<span class="t" style="left:500.51px;top:209.60px;transform:scaleX(0.9826);">Установки</span>
<div class="sunk" style="left:500px;top:225px;width:84px;height:21px;background:#fff;"></div>
<span class="t" style="left:503.54px;top:228.58px;transform:scaleX(0.9139);font-size:12.5px;line-height:14.5px;height:14.5px;">12 X</span>
<div class="btn" style="left:566px;top:227px;width:16px;height:17px;"><svg style="left:3px;top:5px" width="7" height="4" viewBox="0 0 7 4" shape-rendering="crispEdges"><path d="M0 0h7v1h-7zM1 1h5v1h-5zM2 2h3v1h-3zM3 3h1v1h-1z"/></svg></div>
<div class="btn" style="left:592px;top:224px;width:23px;height:23px;"><div style="left:3px;top:2px;width:15px;height:16px;background:#fff;border:1px solid #000"></div>
<svg style="left:5px;top:4px" width="11" height="13" viewBox="0 0 11 13" fill="none" stroke="#008000" stroke-width="1.3">
<path d="M2.2 6.2V3.4H6"/><path d="M5.4 0.9L8.2 3.4L5.4 5.9Z" fill="#008000" stroke="none"/>
<path d="M8.8 6.6V9.4H5"/><path d="M5.6 6.9L2.8 9.4L5.6 11.9Z" fill="#008000" stroke="none"/>
</svg></div>
<span class="t" style="left:501.75px;top:256.00px;transform:scaleX(0.9042);">Старт:</span>
<div class="sunk" style="left:554px;top:251px;width:60px;height:20px;background:#fff;"></div>
<span class="t" style="left:557.04px;top:254.40px;transform:scaleX(0.9178);">000:00.00</span>
<span class="t" style="left:501.74px;top:278.00px;transform:scaleX(0.9281);">Конец:</span>
<div class="sunk" style="left:554px;top:274px;width:60px;height:20px;background:#fff;"></div>
<span class="t" style="left:557.04px;top:277.40px;transform:scaleX(0.9178);">079:57.74</span>
<div class="sunk" style="left:502px;top:296px;width:13px;height:13px;background:#fff;"></div>
<span class="t" style="left:519.73px;top:296.00px;transform:scaleX(0.9372);">Быстр.скан.</span>
<div class="sunk" style="left:502px;top:314px;width:13px;height:13px;background:#fff;"><svg style="left:2px;top:2px" width="7" height="7" viewBox="0 0 7 7" shape-rendering="crispEdges"><path d="M0 2h1v3h-1zM1 3h1v3h-1zM2 4h1v3h-1zM3 3h1v3h-1zM4 2h1v3h-1zM5 1h1v3h-1zM6 0h1v3h-1z"/></svg></div>
<span class="t" style="left:519.75px;top:313.50px;transform:scaleX(0.8920);">Отобр. C1/PIE</span>
<div class="sunk" style="left:502px;top:329px;width:13px;height:13px;background:#fff;"><svg style="left:2px;top:2px" width="7" height="7" viewBox="0 0 7 7" shape-rendering="crispEdges"><path d="M0 2h1v3h-1zM1 3h1v3h-1zM2 4h1v3h-1zM3 3h1v3h-1zM4 2h1v3h-1zM5 1h1v3h-1zM6 0h1v3h-1z"/></svg></div>
<span class="t" style="left:519.75px;top:328.70px;transform:scaleX(0.8996);">Отобр. C2/PIF</span>
<div class="sunk" style="left:502px;top:345px;width:13px;height:13px;background:#fff;"><svg style="left:2px;top:2px" width="7" height="7" viewBox="0 0 7 7" shape-rendering="crispEdges"><path d="M0 2h1v3h-1zM1 3h1v3h-1zM2 4h1v3h-1zM3 3h1v3h-1zM4 2h1v3h-1zM5 1h1v3h-1zM6 0h1v3h-1z"/></svg></div>
<span class="t" style="left:519.76px;top:345.00px;transform:scaleX(0.8848);">Отобр. Jitter</span>
<div class="sunk" style="left:502px;top:361px;width:13px;height:13px;background:#fff;"><svg style="left:2px;top:2px" width="7" height="7" viewBox="0 0 7 7" shape-rendering="crispEdges"><path d="M0 2h1v3h-1zM1 3h1v3h-1zM2 4h1v3h-1zM3 3h1v3h-1zM4 2h1v3h-1zM5 1h1v3h-1zM6 0h1v3h-1z"/></svg></div>
<span class="t" style="left:519.74px;top:361.00px;transform:scaleX(0.9181);">Отобр. скор. чтения</span>
<div class="sunk" style="left:502px;top:377px;width:13px;height:13px;background:#fff;"><svg style="left:2px;top:2px" width="7" height="7" viewBox="0 0 7 7" shape-rendering="crispEdges"><path d="M0 2h1v3h-1zM1 3h1v3h-1zM2 4h1v3h-1zM3 3h1v3h-1zM4 2h1v3h-1zM5 1h1v3h-1zM6 0h1v3h-1z"/></svg></div>
<span class="t" style="left:519.73px;top:376.50px;transform:scaleX(0.9364);">Отобр. скор. записи</span>
<div class="btn" style="left:527px;top:393px;width:98px;height:22px;"></div>
<span class="t" style="left:555.05px;top:397.00px;transform:scaleX(0.8902);">Расшир.</span>
<div class="gb" style="left:491px;top:425px;width:139px;height:26px;"></div>
<span class="t" style="left:502.53px;top:432.00px;transform:scaleX(0.9426);">Индекс</span>
<span class="t" style="left:614.32px;top:432.00px;transform:scaleX(0.9589);color:#000080;">0</span>
<div class="gb" style="left:491px;top:457px;width:139px;height:56px;"></div>
<span class="t" style="left:502.06px;top:466.00px;transform:scaleX(0.8800);">Выполнено:</span>
<span class="t" style="left:591.77px;top:466.00px;transform:scaleX(0.8523);color:#000080;">100 %</span>
<span class="t" style="left:502.05px;top:482.00px;transform:scaleX(0.9063);">Положение:</span>
<span class="t" style="left:578.25px;top:482.00px;transform:scaleX(0.9098);color:#000080;">79:55.00</span>
<span class="t" style="left:502.05px;top:497.00px;transform:scaleX(0.8975);">Скорость:</span>
<span class="t" style="left:582.74px;top:497.00px;transform:scaleX(0.9186);color:#000080;">12.13 X</span>
</body></html>
